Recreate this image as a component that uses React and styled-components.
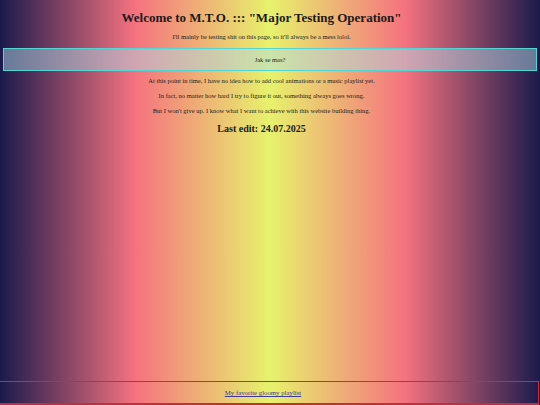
import React from "react";
import styled, { createGlobalStyle } from "styled-components";

const Global = createGlobalStyle`
  html, body { margin: 0; padding: 0; height: 100%; }
  body {
    font-family: "Liberation Serif", "Times New Roman", serif;
    color: #1a1a1a;
    background: linear-gradient(to right, #1b1a4c 0%, #f5727f 25%, #e7f26c 50%, #f5727f 75%, #1b1a4c 100%);
    background-attachment: fixed;
    min-height: 405px;
  }
  #root { min-height: 405px; }
`;

const Page = styled.div`
  display: flex;
  flex-direction: column;
  min-height: 405px;
  text-align: center;
`;

const Title = styled.h1`
  font-size: 13px;
  font-weight: bold;
  margin: 10px 0 8px;
  padding-right: 17px;
  line-height: 15px;
`;

const Text = styled.p`
  font-size: 6.5px;
  line-height: 8px;
  padding-right: 17px;
  margin: 0 0 ${(p) => p.$gap || 6.5}px;
`;

const Banner = styled.div`
  margin: 0 3px 6px;
  height: 21px;
  border: 1px solid #55d4d4;
  background: rgba(173, 216, 230, 0.5);
  display: flex;
  align-items: center;
  justify-content: center;
  font-size: 6.5px;
`;

const Edit = styled.h2`
  font-size: 10px;
  font-weight: bold;
  margin: 1.5px 0 0;
  padding-right: 17px;
  line-height: 12px;
`;

const Spacer = styled.div`
  flex: 1;
`;

const Footer = styled.footer`
  height: 21px;
  margin-left: -1px;
  margin-right: 1px;
  padding-right: 12px;
  border: 1px solid #c0303c;
  border-bottom-width: 2px;
  display: flex;
  align-items: center;
  justify-content: center;
  font-size: 6.8px;
`;

const Link = styled.a`
  color: #3f3a96;
  text-decoration: underline;
`;

export default function App() {
  return (
    <Page>
      <Global />
      <Title>Welcome to M.T.O. ::: "Major Testing Operation"</Title>
      <Text $gap={7}>I'll mainly be testing shit on this page, so it'll always be a mess lolol.</Text>
      <Banner>Jak se mas?</Banner>
      <Text $gap={7}>At this point in time, I have no idea how to add cool animations or a music playlist yet.</Text>
      <Text>In fact, no matter how hard I try to figure it out, something always goes wrong.</Text>
      <Text>But I won't give up. I know what I want to achieve with this website building thing.</Text>
      <Edit>Last edit: 24.07.2025</Edit>
      <Spacer />
      <Footer>
        <Link href="#">My favorite gloomy playlist</Link>
      </Footer>
    </Page>
  );
}
